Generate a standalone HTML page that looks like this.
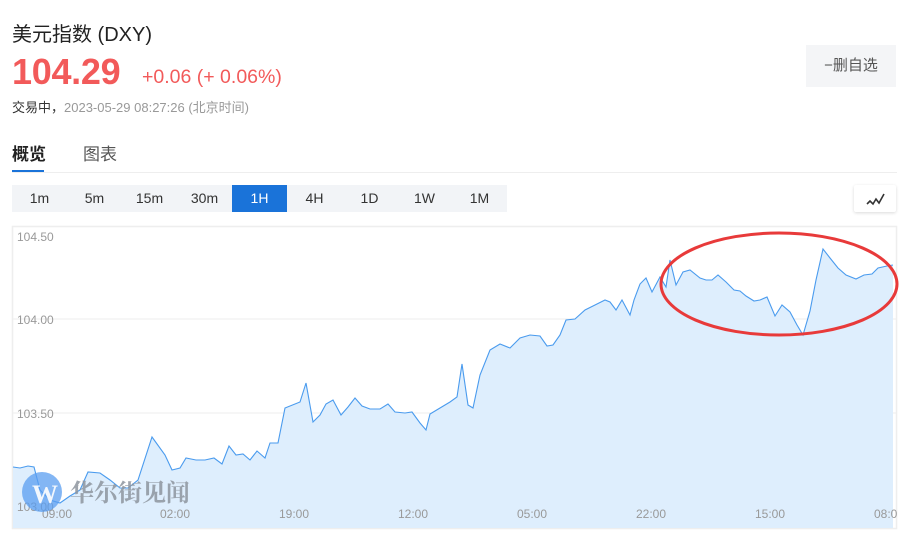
<!DOCTYPE html>
<html><head><meta charset="utf-8">
<style>
*{margin:0;padding:0;box-sizing:border-box}
body{width:911px;height:537px;background:#fff;font-family:"Liberation Sans","Noto Sans CJK SC",sans-serif;position:relative;overflow:hidden;color:#333}
.a{position:absolute;white-space:nowrap}
.tb{position:absolute;top:185px;height:27px;width:55px;background:#f2f4f7;font-size:14px;color:#333;text-align:center;line-height:27px}
</style></head><body>
<div class="a" style="left:12px;top:18px;font-size:20px;color:#222">美元指数 (DXY)</div>
<div class="a" style="left:12px;top:51px;font-size:36px;font-weight:bold;color:#f25a5a;letter-spacing:-0.3px">104.29</div>
<div class="a" style="left:142px;top:66px;font-size:19.5px;color:#f25a5a">+0.06 (+ 0.06%)</div>
<div class="a" style="left:12px;top:97px;font-size:13px;color:#333">交易中，<span style="color:#999">2023-05-29 08:27:26 (北京时间)</span></div>
<div class="a" style="left:806px;top:45px;width:90px;height:42px;background:#f4f5f7;font-size:15px;color:#555;text-align:center;line-height:42px">−删自选</div>
<div class="a" style="left:12px;top:140px;font-size:17px;font-weight:bold;color:#222">概览</div>
<div class="a" style="left:83px;top:140px;font-size:17px;color:#555">图表</div>
<div class="a" style="left:12px;top:170px;width:32px;height:3px;background:#1a73d9"></div>
<div class="a" style="left:12px;top:172px;width:885px;height:1px;background:#eee"></div>
<div class="tb" style="left:12px">1m</div>
<div class="tb" style="left:67px">5m</div>
<div class="tb" style="left:122px">15m</div>
<div class="tb" style="left:177px">30m</div>
<div class="tb" style="left:232px;background:#1a73d9;color:#fff">1H</div>
<div class="tb" style="left:287px">4H</div>
<div class="tb" style="left:342px">1D</div>
<div class="tb" style="left:397px">1W</div>
<div class="tb" style="left:452px">1M</div>
<div class="a" style="left:854px;top:185px;width:42px;height:27px;background:#fff;box-shadow:0 1px 3px rgba(0,0,0,.15);border-radius:2px">
<svg width="42" height="27"><polyline points="13,19 16,16 19,19 22,14 25,18 30,9" fill="none" stroke="#333" stroke-width="1.6"/></svg></div>
<svg class="a" style="left:0;top:0" width="911" height="537">
<defs><clipPath id="c"><rect x="12" y="226" width="885" height="303"/></clipPath></defs>
<rect x="12.5" y="226.5" width="884" height="302" fill="none" stroke="#eee" stroke-width="1.5"/>
<line x1="12" y1="319" x2="896" y2="319" stroke="#eee"/>
<line x1="12" y1="413" x2="896" y2="413" stroke="#eee"/>
<polygon fill="#deeefd" points="13,528 13,467 20,468 28,466 34,467 40,490 50,500 60,503 70,496 80,490 88,472 100,473 110,480 120,488 128,488 138,480 152,437 165,455 172,470 180,468 186,458 196,460 205,460 214,458 222,464 229,446 236,455 243,454 250,460 257,451 265,458 270,443 278,443 285,408 300,402 306,383 313,422 320,415 326,404 333,400 341,415 348,407 355,398 362,406 370,409 380,409 388,404 395,412 405,413 412,412 420,423 426,430 430,414 440,408 450,402 457,397 462,364 468,405 473,408 480,375 490,350 500,344 510,348 520,338 530,335 540,336 547,346 553,345 560,335 566,320 575,319 585,310 595,305 605,300 610,302 616,310 622,300 630,315 634,300 640,284 646,278 652,292 660,277 666,287 670,260 676,285 683,272 690,270 700,278 706,280 712,280 718,275 726,282 734,290 740,291 746,296 754,301 760,300 767,297 775,316 782,305 790,312 797,325 803,335 810,311 816,280 823,249 830,258 838,268 846,275 856,279 864,275 872,274 878,268 887,266 893,265 893,528"/>
<polyline fill="none" stroke="#4a9bee" stroke-width="1.1" points="13,467 20,468 28,466 34,467 40,490 50,500 60,503 70,496 80,490 88,472 100,473 110,480 120,488 128,488 138,480 152,437 165,455 172,470 180,468 186,458 196,460 205,460 214,458 222,464 229,446 236,455 243,454 250,460 257,451 265,458 270,443 278,443 285,408 300,402 306,383 313,422 320,415 326,404 333,400 341,415 348,407 355,398 362,406 370,409 380,409 388,404 395,412 405,413 412,412 420,423 426,430 430,414 440,408 450,402 457,397 462,364 468,405 473,408 480,375 490,350 500,344 510,348 520,338 530,335 540,336 547,346 553,345 560,335 566,320 575,319 585,310 595,305 605,300 610,302 616,310 622,300 630,315 634,300 640,284 646,278 652,292 660,277 666,287 670,260 676,285 683,272 690,270 700,278 706,280 712,280 718,275 726,282 734,290 740,291 746,296 754,301 760,300 767,297 775,316 782,305 790,312 797,325 803,335 810,311 816,280 823,249 830,258 838,268 846,275 856,279 864,275 872,274 878,268 887,266 893,265"/>
<g font-family="Liberation Sans,sans-serif" font-size="12" fill="#999" clip-path="url(#c)">
<text x="17" y="241">104.50</text><text x="17" y="324">104.00</text><text x="17" y="418">103.50</text><text x="17" y="511">103.00</text>
<text x="42" y="518">09:00</text><text x="160" y="518">02:00</text><text x="279" y="518">19:00</text><text x="398" y="518">12:00</text><text x="517" y="518">05:00</text><text x="636" y="518">22:00</text><text x="755" y="518">15:00</text><text x="874" y="518">08:00</text>
</g>
<circle cx="42" cy="492" r="20" fill="#5a9ef0" opacity="0.75"/>
<text x="32" y="503" font-family="Liberation Serif,serif" font-size="26" font-weight="bold" fill="#fff" opacity="0.9">W</text>
<text x="70" y="501" font-family="Noto Serif CJK SC,serif" font-size="24" font-weight="bold" fill="#8e959e" opacity="0.85">华尔街见闻</text>
<ellipse cx="779" cy="284" rx="118" ry="51" fill="none" stroke="#e83a3a" stroke-width="3"/>
</svg>
</body></html>
